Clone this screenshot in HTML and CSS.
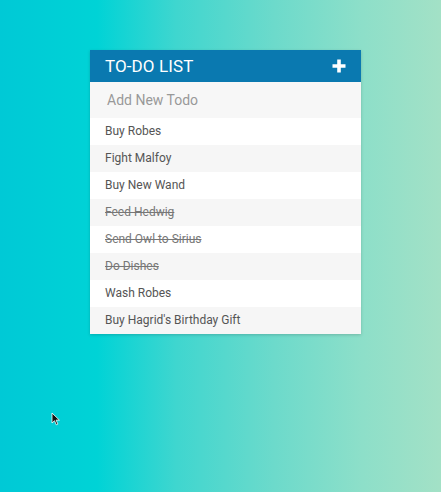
FILE: index.html
```html
<!DOCTYPE html>
<html>
<head>
<meta charset="utf-8">
<link rel="stylesheet" href="styles.css">
</head>
<body>
<div class="page">
  <div class="card">
    <div class="header">
      <span class="title">TO-DO LIST</span>
      <svg class="plus" width="14" height="14" viewBox="0 0 14 14"><path d="M5.2 0.5h3.6v4.7h4.7v3.6H8.8v4.7H5.2V8.8H0.5V5.2h4.7z" fill="#fff"/></svg>
    </div>
    <div class="add">Add New Todo</div>
    <ul class="list">
      <li>Buy Robes</li>
      <li>Fight Malfoy</li>
      <li>Buy New Wand</li>
      <li class="done">Feed Hedwig</li>
      <li class="done">Send Owl to Sirius</li>
      <li class="done">Do Dishes</li>
      <li>Wash Robes</li>
      <li>Buy Hagrid's Birthday Gift</li>
    </ul>
  </div>
  <svg class="cursor" width="10" height="14" viewBox="0 0 10 14"><path d="M1 1v10l2.5-2.3 1.8 4.1 1.6-.7-1.8-4h3.3z" fill="#111" stroke="#fff" stroke-width="0.8"/></svg>
</div>
</body>
</html>
```
FILE: styles.css
```css
html, body {
  margin: 0;
  padding: 0;
}
body {
  width: 441px;
  height: 492px;
  overflow: hidden;
  font-family: Roboto, "Liberation Sans", sans-serif;
}
.page {
  position: relative;
  box-sizing: border-box;
  width: 441px;
  height: 492px;
  padding: 50px 0 0 90px;
  background: linear-gradient(to right, #00c9d6 0%, #00d3d6 22%, #3fd6cf 40%, #6cdacb 62%, #8ddfc9 82%, #a3e1c6 100%);
}
.card {
  width: 271px;
  background: #fff;
  box-shadow: 0 1px 3px rgba(0, 0, 0, 0.18);
}
.header {
  height: 32px;
  background: #0a79b0;
  display: flex;
  align-items: center;
  justify-content: space-between;
  padding: 0 15px 0 15px;
}
.title {
  color: #fff;
  font-size: 17px;
  letter-spacing: 0.1px;
}
.plus {
  display: block;
  margin-top: -1px;
}
.add {
  height: 36px;
  line-height: 36px;
  background: #f7f7f7;
  padding-left: 17px;
  color: #999;
  font-size: 14px;
}
.list {
  list-style: none;
  margin: 0;
  padding: 0;
}
.list li {
  height: 27px;
  line-height: 27px;
  padding-left: 15px;
  font-size: 12px;
  color: #555;
  background: #fff;
}
.list li:nth-child(even) {
  background: #f6f6f6;
}
.list li.done {
  text-decoration: line-through;
  color: #777;
}
.cursor {
  position: absolute;
  left: 51px;
  top: 412px;
}
```
